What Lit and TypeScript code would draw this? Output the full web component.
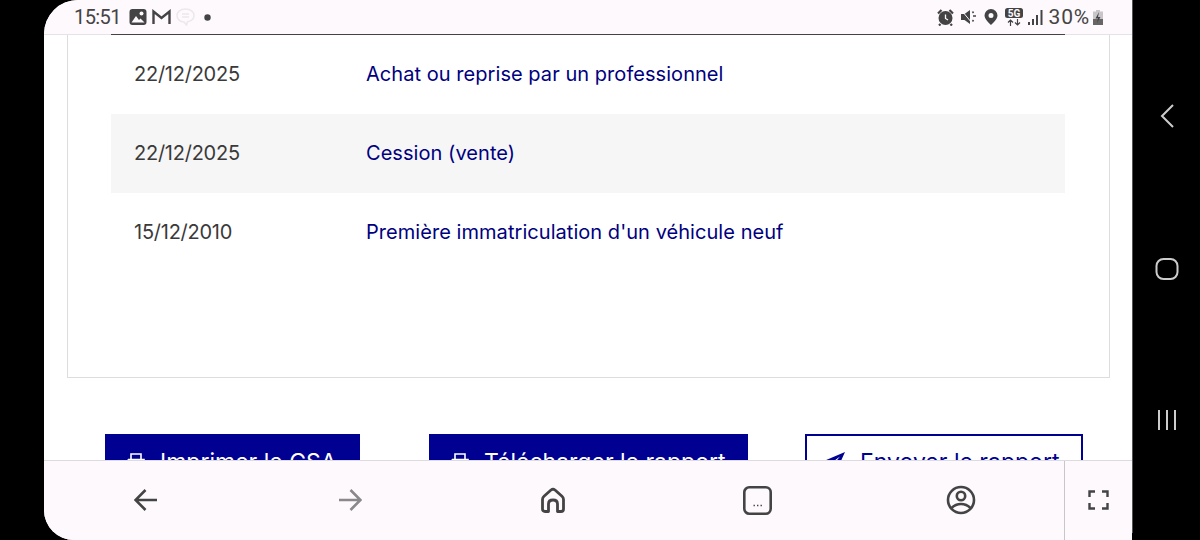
import { LitElement, html, css, svg } from 'lit';
import { customElement } from 'lit/decorators.js';

const rows = [
  { date: '22/12/2025', label: 'Achat ou reprise par un professionnel' },
  { date: '22/12/2025', label: 'Cession (vente)' },
  { date: '15/12/2010', label: "Première immatriculation d'un véhicule neuf" },
];

const printer = svg`<svg class="btn-icon" width="18" height="18" viewBox="0 0 18 18" fill="none" stroke="currentColor" stroke-width="1.6"><path d="M4 6V1h10v5M1 6.500h16V13h-3M4 13H1V6.500M4 10.500h10V17H4z"/></svg>`;

const send = svg`<svg class="btn-icon send" width="20" height="20" viewBox="0 0 20 20" fill="currentColor"><path d="M20 0 0 8.500l5.500 3L15 4.500 8 13l3 7z"/></svg>`;

@customElement('app-root')
export class AppRoot extends LitElement {
  static override styles = css`
    :host {
      display: flex;
      width: 1200px;
      height: 540px;
      background: #000;
      overflow: hidden;
      font-family: Inter, 'Liberation Sans', sans-serif;
    }
    .screen {
      margin-left: 44px;
      width: 1088px;
      height: 540px;
      display: flex;
      flex-direction: column;
      background: #fff;
      border-radius: 34px 0 0 30px;
      overflow: hidden;
    }

    /* status bar */
    .status {
      height: 34px;
      flex: none;
      display: flex;
      align-items: center;
      justify-content: space-between;
      padding: 0 28px 0 30px;
      background: #fdf9fd;
      color: #444;
      font-family: Roboto, sans-serif;
      font-size: 20px;
    }
    .status-group {
      display: flex;
      align-items: center;
    }
    .status svg {
      display: block;
      flex: none;
    }
    .time {
      margin-right: 8px;
      letter-spacing: -0.6px;
    }
    .pct {
      margin: 0 2px 0 6px;
      font-size: 21px;
      letter-spacing: 0.8px;
    }
    .gap-l {
      margin-left: 5px;
    }
    .gap-m {
      margin-left: 7px;
    }
    .gap-xl {
      margin-left: 9px;
    }

    .rule {
      height: 1px;
      flex: none;
      background: #e6e3e6;
      padding: 0 67px;
    }
    .rule div {
      height: 1px;
      background: #444;
    }

    /* web page */
    .page {
      flex: 1;
      min-height: 0;
      overflow: hidden;
      background: #fff;
    }
    .card {
      height: 342px;
      margin: 0 22px 0 23px;
      border: 1px solid #ddd;
      border-top: 0;
      padding: 0 44px 0 43px;
      box-sizing: content-box;
    }
    .row {
      display: grid;
      grid-template-columns: 232px 1fr;
      align-items: center;
      box-sizing: border-box;
      height: 79px;
      padding: 0 0 2px 23px;
      font-size: 20px;
    }
    .row:nth-child(even) {
      background: #f6f6f6;
    }
    .date {
      color: #3a3a3a;
      letter-spacing: -0.25px;
    }
    .label {
      color: #000080;
      letter-spacing: 0.05px;
    }
    .actions {
      display: flex;
      margin: 56px 0 0 61px;
    }
    .btn {
      flex: none;
      box-sizing: border-box;
      height: 56px;
      display: flex;
      align-items: center;
      padding-left: 22px;
      gap: 15px;
      background: #000091;
      color: #fff;
      font-size: 23px;
    }
    .btn.print {
      width: 255px;
      margin-right: 69px;
    }
    .btn.download {
      width: 319px;
      margin-right: 57px;
    }
    .btn.outline {
      width: 278px;
      padding-left: 18px;
      background: #fff;
      color: #000091;
      border: 2px solid #000091;
    }
    .btn-icon {
      flex: none;
    }

    /* browser toolbar */
    .toolbar {
      height: 79px;
      flex: none;
      display: flex;
      background: #fdf9fd;
      border-top: 1px solid #dedbde;
    }
    .tabs {
      width: 1020px;
      box-sizing: border-box;
      padding: 0 1px 1px 0;
      display: grid;
      grid-template-columns: repeat(5, 1fr);
      align-items: center;
      justify-items: center;
    }
    .expand {
      flex: 1;
      display: flex;
      align-items: center;
      justify-content: center;
      padding-bottom: 1px;
      border-left: 1px solid #c8c6c8;
    }

    /* android nav */
    .nav {
      width: 68px;
      height: 533px;
      flex: none;
      display: flex;
      flex-direction: column;
      align-items: center;
      justify-content: center;
      gap: 130px;
      border-left: 1px solid #555;
      box-sizing: border-box;
    }
    .nav svg {
      display: block;
    }
  `;

  private statusLeft() {
    return html`
      <div class="status-group">
        <span class="time">15:51</span>
        <svg width="18" height="18" viewBox="0 0 18 18"><rect x="0.500" y="1" width="17" height="16" rx="3" fill="#444"/><circle cx="12.500" cy="5.500" r="2" fill="#fdf9fd"/><path d="M2.500 14.500 7 8l3 4 1.500-1.500 4 4z" fill="#fdf9fd"/></svg>
        <svg class="gap-l" width="19" height="16" viewBox="0 0 19 16" fill="none" stroke="#444" stroke-width="2.400"><path d="M1.500 15V2.500L9.500 9l8-6.500V15"/></svg>
        <svg class="gap-l" width="19" height="18" viewBox="0 0 19 18" fill="none" stroke="#ece9ec" stroke-width="1.600"><path d="M9.500 1C4.500 1 1 4 1 7.500S4 14 8 14l2.500 3 1-3.200C15.500 13 18 11 18 7.500S14.500 1 9.500 1z"/><path d="M6 6h7M6 9h7"/></svg>
        <svg class="gap-xl" width="7" height="7" viewBox="0 0 7 7"><circle cx="3.500" cy="3.500" r="3.200" fill="#444"/></svg>
      </div>
    `;
  }

  private statusRight() {
    return html`
      <div class="status-group">
        <svg width="17" height="17" viewBox="0 0 17 17"><circle cx="8.500" cy="9" r="7" fill="#444"/><path d="M1 4.500 4.500 1M16 4.500 12.500 1M3.500 15l-1.500 1.500M13.500 15l1.500 1.500" stroke="#444" stroke-width="2.200"/><path d="M8.500 5.500V9.500l2.500 1.500" stroke="#fdf9fd" stroke-width="1.300" fill="none"/></svg>
        <svg class="gap-m" width="16" height="16" viewBox="0 0 16 16" fill="#444"><path d="M0 5h3.500L9 1v14l-5.500-4H0z"/><path d="M1 2l10 12" stroke="#fdf9fd" stroke-width="1"/><path d="M11.500 2.500l1 1.500M12 7h3M11.500 12.500l1-1.500" stroke="#444" stroke-width="1.500" fill="none"/></svg>
        <svg class="gap-m" width="14" height="16" viewBox="0 0 14 16"><path fill-rule="evenodd" fill="#444" d="M7 0a6.500 6.500 0 0 1 6.500 6.500C13.500 10.500 7 16 7 16S.5 10.500.5 6.500A6.500 6.500 0 0 1 7 0zm0 4a2.500 2.500 0 1 0 0 5 2.500 2.500 0 0 0 0-5z"/></svg>
        <svg class="gap-m" width="18" height="19" viewBox="0 0 18 19"><rect width="18" height="10" rx="2.500" fill="#444"/><text x="9" y="8.800" text-anchor="middle" font-family="Roboto, sans-serif" font-size="10" font-weight="700" fill="#fdf9fd">5G</text><path d="M5.500 18v-6M3 14.500 5.500 12 8 14.500M12.500 11v6M10 14.500l2.500 2.500 2.500-2.500" stroke="#444" stroke-width="1.200" fill="none"/></svg>
        <svg class="gap-l" width="15" height="15" viewBox="0 0 15 15" fill="#444"><rect x="0" y="12" width="2" height="3"/><rect x="4" y="9" width="2" height="6"/><rect x="8" y="5" width="2" height="10"/><rect x="12.500" y="0" width="2" height="15"/></svg>
        <span class="pct">30%</span>
        <svg width="12" height="15" viewBox="0 0 12 15"><path d="M4 0h4v1.500h3V15H1V1.500h3z" fill="#c9c6c9"/><rect x="1" y="9" width="10" height="6" fill="#666"/><path d="M7 2 3.500 8.500H6L5 13l3.500-6H6z" fill="#444"/></svg>
      </div>
    `;
  }

  override render() {
    return html`
      <div class="screen">
        <div class="status">${this.statusLeft()}${this.statusRight()}</div>
        <div class="rule"><div></div></div>
        <div class="page">
          <div class="card">
            ${rows.map(
              (r) => html`
                <div class="row">
                  <span class="date">${r.date}</span>
                  <span class="label">${r.label}</span>
                </div>
              `
            )}
          </div>
          <div class="actions">
            <div class="btn print">${printer}<span>Imprimer le CSA</span></div>
            <div class="btn download">${printer}<span>Télécharger le rapport</span></div>
            <div class="btn outline">${send}<span>Envoyer le rapport</span></div>
          </div>
        </div>
        <div class="toolbar">
          <div class="tabs">
            <svg width="24" height="24" viewBox="0 0 24 24" fill="none" stroke="#444" stroke-width="2.600"><path d="M23 12H2M11.500 2 1.500 12l10 10"/></svg>
            <svg width="24" height="24" viewBox="0 0 24 24" fill="none" stroke="#8a888a" stroke-width="2.600"><path d="M1 12h21M12.500 2l10 10-10 10"/></svg>
            <svg width="24" height="26" viewBox="0 0 24 26" fill="none" stroke="#444" stroke-width="2.800" stroke-linejoin="round"><path d="M1.500 12.500q0-2 1.500-3.300l7-6.200q2-1.500 4 0l7 6.200q1.500 1.300 1.500 3.300V22q0 2.500-2.500 2.500h-3.500V17q0-4-4.500-4T7.500 17v7.500H4q-2.500 0-2.500-2.500z"/></svg>
            <svg width="29" height="29" viewBox="0 0 29 29" fill="none"><rect x="1.300" y="1.300" width="26.400" height="26.400" rx="5" stroke="#444" stroke-width="2.600"/><path d="M10.500 19.500h1.400M14 19.500h1.400M17.500 19.500h1.400" stroke="#444" stroke-width="1.400"/></svg>
            <svg width="30" height="30" viewBox="0 0 30 30" fill="none" stroke="#444" stroke-width="2.600"><circle cx="15" cy="15" r="13"/><circle cx="15" cy="11" r="4.200"/><path d="M5.500 23q4-4 9.500-4t9.500 4"/></svg>
          </div>
          <div class="expand">
            <svg width="21" height="20" viewBox="0 0 21 20" fill="none" stroke="#444" stroke-width="2.400"><path d="M1.500 7V1.500H7M14 1.500h5.500V7M19.500 13v5.500H14M7 18.500H1.500V13"/></svg>
          </div>
        </div>
      </div>
      <div class="nav">
        <svg width="14" height="24" viewBox="0 0 14 24" fill="none" stroke="#ccc" stroke-width="2"><path d="M13 1 2 12l11 11"/></svg>
        <svg width="24" height="22" viewBox="0 0 24 22" fill="none" stroke="#ccc" stroke-width="2"><rect x="1.500" y="1" width="21" height="20" rx="7"/></svg>
        <svg width="20" height="20" viewBox="0 0 20 20" fill="none" stroke="#ccc" stroke-width="2"><path d="M2 0v20M10 0v20M18 0v20"/></svg>
      </div>
    `;
  }
}
